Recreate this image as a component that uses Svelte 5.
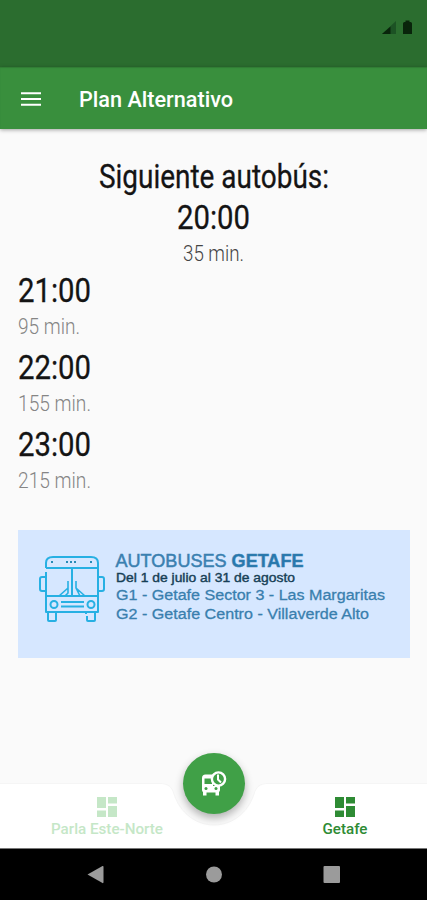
<script>
	const next = { time: '20:00', wait: '35 min.', waitWidth: 61 };

	const departures = [
		{ time: '21:00', wait: '95 min.', waitWidth: 62 },
		{ time: '22:00', wait: '155 min.', waitWidth: 73 },
		{ time: '23:00', wait: '215 min.', waitWidth: 73 }
	];

	const banner = [
		{ text: 'Del 1 de julio al 31 de agosto', y: 52, size: 12.6, width: 179, kind: 'dates' },
		{ text: 'G1 - Getafe Sector 3 - Las Margaritas', y: 70, size: 15.4, width: 269, kind: 'route' },
		{ text: 'G2 - Getafe Centro - Villaverde Alto', y: 89, size: 15.4, width: 253, kind: 'route' }
	];

	const tabs = [
		{ label: 'Parla Este-Norte', active: false },
		{ label: 'Getafe', active: true }
	];
</script>

<!-- Condensed text, squeezed to a given width -->
{#snippet narrow(text, width, kind)}
	<svg class="narrow {kind}" width={width + 2} height={kind === 'time' ? 41 : 30}>
		<text x="1" y={kind === 'time' ? 31 : 21.5} textLength={width} lengthAdjust="spacingAndGlyphs">{text}</text>
	</svg>
{/snippet}

<div class="screen">
	<div class="status">
		<svg width="32" height="16" viewBox="0 0 32 16">
			<path d="M15 1V14H1z" fill="#1c5224" />
			<path d="M9.500 6.500V14H1z" fill="#09240b" />
			<path d="M22 3.500q0-1.500 1.500-1.500h1V.500h4V2h1q1.500 0 1.500 1.500V14h-9z" fill="#09240b" />
		</svg>
	</div>

	<header>
		<svg class="menu" width="20" height="14" viewBox="0 0 20 14">
			<path d="M0 1.200h20M0 7h20M0 12.800h20" stroke="#fff" stroke-width="2" />
		</svg>
		<svg class="title" width="160" height="30">
			<text x="0" y="22.500" textLength="154" lengthAdjust="spacingAndGlyphs">Plan Alternativo</text>
		</svg>
	</header>

	<main>
		<section class="next">
			{@render narrow('Siguiente autobús:', 230, 'time')}
			{@render narrow(next.time, 73, 'time')}
			{@render narrow(next.wait, next.waitWidth, 'wait dark')}
		</section>

		<ul>
			{#each departures as departure}
				<li>
					{@render narrow(departure.time, 73, 'time')}
					{@render narrow(departure.wait, departure.waitWidth, 'wait')}
				</li>
			{/each}
		</ul>

		<div class="banner">
			<svg width="392" height="128" viewBox="0 0 392 128">
				<g fill="none" stroke="#27b0e3" stroke-width="2" stroke-linejoin="round">
					<path d="M28 38V33Q28 27 35 27H73Q80 27 80 33V82H28V42M28 38H80M28 66H80M54 38V66" />
					<path d="M28 47H24Q22 47 22 49V59Q22 61 24 61H28M80 47H84Q86 47 86 49V59Q86 61 84 61H80" />
					<path d="M30 83V90Q30 91 31 91H37Q38 91 38 90V83M69 86V90Q69 91 70 91H76Q77 91 77 90V83M67 83H69" />
					<circle cx="36" cy="74.500" r="3.500" />
					<circle cx="73" cy="74.500" r="3.500" />
					<path d="M43 72H66M43 76.500H66" />
					<path d="M50 51V58L41 66M50 58V63L47 66M58 51V58L67 66M58 58L62 66" stroke-width="1.600" />
				</g>
				<path d="M33 32h2M48 32h2M52 32h2M56 32h2M72 32h2" stroke="#278bb7" stroke-width="1.800" />
				<text class="brand" x="97.500" y="36.500" textLength="188" lengthAdjust="spacingAndGlyphs">AUTOBUSES <tspan class="city">GETAFE</tspan></text>
				{#each banner as line}
					<text
						class={line.kind}
						x="98"
						y={line.y}
						font-size={line.size}
						textLength={line.width}
						lengthAdjust="spacingAndGlyphs">{line.text}</text
					>
				{/each}
			</svg>
		</div>
	</main>

	<footer>
		<svg class="notch" width="427" height="65" viewBox="0 0 427 65">
			<path
				d="M-2 .500H160C168 .500 172 4 174 11C180 30 196 42 214 42C232 42 248 30 254 11C256 4 260 .500 268 .500H429V68H-2z"
				fill="#fff"
				stroke="#f5f5f5"
			/>
		</svg>
		{#each tabs as tab}
			<div class="tab" class:active={tab.active}>
				<svg width="20" height="20" viewBox="0 0 20 20">
					<path d="M0 0h9v11H0zM11 0h9v6.500h-9zM0 13.500h9V20H0zM11 9h9v11h-9z" fill="currentColor" />
				</svg>
				<svg class="label" width="114" height="18">
					<text
						x="57"
						y="13.500"
						text-anchor="middle"
						textLength={tab.active ? 45 : 112}
						lengthAdjust="spacingAndGlyphs">{tab.label}</text
					>
				</svg>
			</div>
		{/each}
		<button class="fab" aria-label="Próximo autobús">
			<svg width="28" height="28" viewBox="0 0 28 28">
				<path
					d="M13 4.500H5.500Q2 4.500 2 8V20Q2 21.500 3 22V25.500H6.500V22.500H15.500V25.500H19V22Q20 21 20 20V16H13z"
					fill="#fff"
				/>
				<path d="M4.500 8.500H12V14H4.500z" fill="#40a047" />
				<circle cx="6" cy="18.500" r="1.500" fill="#40a047" />
				<circle cx="16" cy="18.500" r="1.500" fill="#40a047" />
				<circle cx="18.500" cy="9" r="6.600" fill="#40a047" stroke="#fff" stroke-width="2.400" />
				<path d="M18 4.500V9.500L21 12.500" fill="none" stroke="#fff" stroke-width="2" />
			</svg>
		</button>
	</footer>

	<nav>
		<svg width="427" height="51" viewBox="0 1 427 51">
			<g fill="#9b9b9b">
				<path d="M87.500 26.500 102.500 18Q103.500 17.500 103.500 19V34Q103.500 35.500 102.500 35z" />
				<circle cx="214" cy="26.500" r="8" />
				<rect x="323.500" y="18" width="16.500" height="17" rx="1" />
			</g>
		</svg>
	</nav>
</div>

<style>
	:global(body) {
		margin: 0;
	}

	.screen {
		display: flex;
		flex-direction: column;
		width: 427px;
		height: 900px;
		overflow: hidden;
		background: #fafafa;
		font-family: Roboto, sans-serif;
	}

	svg {
		display: block;
		flex: none;
	}

	.status {
		display: flex;
		justify-content: flex-end;
		box-sizing: border-box;
		height: 67px;
		padding: 20px 14px 0 0;
		background: #2b6d2f;
	}

	header {
		display: flex;
		align-items: center;
		gap: 38px;
		box-sizing: border-box;
		height: 61.500px;
		padding-left: 21px;
		background: #398f3d;
		box-shadow: 0 1px 4px rgba(0, 0, 0, 0.35), inset 0 1px 1px #317d35;
	}

	.menu {
		margin-top: 2px;
	}

	.title {
		margin-top: 3px;
		fill: #fff;
		font-size: 22px;
		font-weight: 500;
	}

	main {
		flex: 1;
		padding: 28.500px 17px 0;
	}

	.next {
		display: flex;
		flex-direction: column;
		align-items: center;
	}

	.narrow {
		overflow: visible;
	}

	.time {
		fill: #141414;
		stroke: #141414;
		stroke-width: 0.3px;
		font-size: 33px;
	}

	.wait {
		fill: #858585;
		font-size: 21.500px;
		font-weight: 300;
	}

	.dark {
		fill: #444;
	}

	ul {
		display: flex;
		flex-direction: column;
		gap: 6.200px;
		margin: 1.600px 0 0;
		padding: 0;
		list-style: none;
	}

	.banner {
		width: 392px;
		margin: 34px 0 0 1px;
		background: #d6e7ff;
		font-family: 'Liberation Sans', Arial, sans-serif;
	}

	.brand {
		fill: #3a80b0;
		stroke: #3a80b0;
		stroke-width: 0.5px;
		font-size: 18px;
	}

	.city {
		fill: #2778ad;
		font-weight: bold;
	}

	.dates {
		fill: #163f56;
		stroke: #163f56;
		stroke-width: 0.4px;
	}

	.route {
		fill: #397fae;
		stroke: #397fae;
		stroke-width: 0.3px;
	}

	footer {
		position: relative;
		display: flex;
		justify-content: space-between;
		box-sizing: border-box;
		height: 66px;
		padding: 14px 25px 0 50px;
	}

	.notch {
		position: absolute;
		top: 0;
		left: 0;
	}

	.tab {
		position: relative;
		display: flex;
		flex-direction: column;
		align-items: center;
		gap: 3px;
		color: #c5e7c7;
	}

	.active {
		color: #2e8b34;
	}

	.label {
		fill: currentColor;
		font-size: 14.500px;
		font-weight: 500;
	}

	.fab {
		position: absolute;
		top: -30px;
		left: 183px;
		display: flex;
		align-items: center;
		justify-content: center;
		width: 62px;
		height: 61px;
		padding: 0;
		border: 0;
		border-radius: 50%;
		background: #40a047;
		box-shadow: 0 4px 9px rgba(0, 0, 0, 0.3);
	}

	nav {
		position: relative;
		box-sizing: border-box;
		height: 51px;
		background: #000;
		box-shadow: 0 -1px 0 #777;
	}
</style>
